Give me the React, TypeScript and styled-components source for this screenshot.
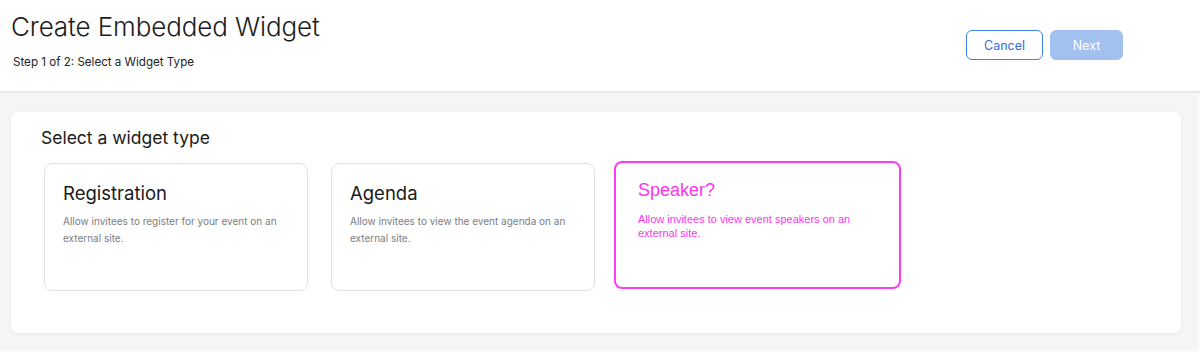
import React from "react";
import styled, { createGlobalStyle } from "styled-components";

const Global = createGlobalStyle`
  html, body { margin: 0; padding: 0; background: #ffffff; }
  body { font-family: "Inter", "Noto Sans", sans-serif; color: #1a1a1a; }
  * { box-sizing: border-box; }
`;

const Page = styled.div`
  width: 1200px;
  height: 352px;
  display: flex;
  flex-direction: column;
  overflow: hidden;
`;

const Header = styled.header`
  height: 94px;
  display: flex;
  justify-content: space-between;
  align-items: flex-start;
  padding: 11px 77px 0 11px;
  border-bottom: 2px solid #e6e7e9;
`;

const TitleBlock = styled.div`
  display: flex;
  flex-direction: column;
`;

const Title = styled.h1`
  margin: 0;
  font-size: 26px;
  font-weight: 300;
  line-height: 32px;
  color: #1c1c1c;
  letter-spacing: -0.1px;
`;

const Step = styled.div`
  margin: 11px 0 0 2px;
  font-size: 11.6px;
  font-weight: 400;
  color: #222;
  line-height: 16px;
`;

const Actions = styled.div`
  display: flex;
  gap: 7px;
  margin-top: 19px;
`;

const Button = styled.button<{ $primary?: boolean }>`
  height: 30px;
  width: ${(p) => (p.$primary ? "73px" : "77px")};
  border-radius: 6px;
  font-family: "Inter", "Noto Sans", sans-serif;
  font-size: 12.5px;
  border: 1px solid ${(p) => (p.$primary ? "#a3c1ee" : "#3d84e6")};
  background: ${(p) => (p.$primary ? "#a3c1ee" : "#ffffff")};
  color: ${(p) => (p.$primary ? "#ffffff" : "#2f6fd6")};
  cursor: pointer;
`;

const Body = styled.main`
  flex: 1;
  background: #f4f5f7;
  padding: 19px 17px 17px 11px;
  border-right: 2px solid #fbfbfc;
  border-bottom: 2px solid #fbfbfc;
`;

const Panel = styled.section`
  background: #ffffff;
  border-radius: 7px;
  box-shadow: 0 1px 3px rgba(0, 0, 0, 0.06);
  height: 221px;
  padding: 15px 0 0 30px;
`;

const PanelTitle = styled.h2`
  margin: 0;
  font-size: 17.5px;
  font-weight: 400;
  line-height: 22px;
  color: #1a1a1a;
`;

const Cards = styled.div`
  display: flex;
  align-items: flex-start;
  margin-top: 14px;
`;

const Card = styled.div<{ $ml: number }>`
  width: 264px;
  height: 128px;
  margin-left: ${(p) => p.$ml}px;
  border: 1px solid #e1e2e4;
  border-radius: 8px;
  padding: 17px 18px 0 18px;
`;

const CardTitle = styled.h3`
  margin: 0;
  font-size: 18.5px;
  font-weight: 400;
  line-height: 24px;
  color: #1a1a1a;
`;

const CardText = styled.p`
  margin: 8px 0 0 0;
  font-size: 10px;
  line-height: 17px;
  color: #7b7d82;
`;

const HotCard = styled.div`
  width: 287px;
  height: 128px;
  margin-left: 19px;
  margin-top: -2px;
  border: 2px solid #ff3cf5;
  border-radius: 8px;
  padding: 15px 22px 0 22px;
  font-family: "Liberation Sans", Arial, sans-serif;
  color: #ff33ee;
`;

const HotTitle = styled.h3`
  margin: 0;
  font-size: 18px;
  font-weight: 400;
  line-height: 24px;
`;

const HotText = styled.p`
  margin: 10px 0 0 0;
  font-size: 11px;
  line-height: 14px;
`;

export default function App() {
  return (
    <>
      <Global />
      <Page>
        <Header>
          <TitleBlock>
            <Title>Create Embedded Widget</Title>
            <Step>Step 1 of 2: Select a Widget Type</Step>
          </TitleBlock>
          <Actions>
            <Button>Cancel</Button>
            <Button $primary>Next</Button>
          </Actions>
        </Header>
        <Body>
          <Panel>
            <PanelTitle>Select a widget type</PanelTitle>
            <Cards>
              <Card $ml={3}>
                <CardTitle>Registration</CardTitle>
                <CardText>
                  Allow invitees to register for your event on an external site.
                </CardText>
              </Card>
              <Card $ml={23}>
                <CardTitle>Agenda</CardTitle>
                <CardText>
                  Allow invitees to view the event agenda on an external site.
                </CardText>
              </Card>
              <HotCard>
                <HotTitle>Speaker?</HotTitle>
                <HotText>
                  Allow invitees to view event speakers on an external site.
                </HotText>
              </HotCard>
            </Cards>
          </Panel>
        </Body>
      </Page>
    </>
  );
}
